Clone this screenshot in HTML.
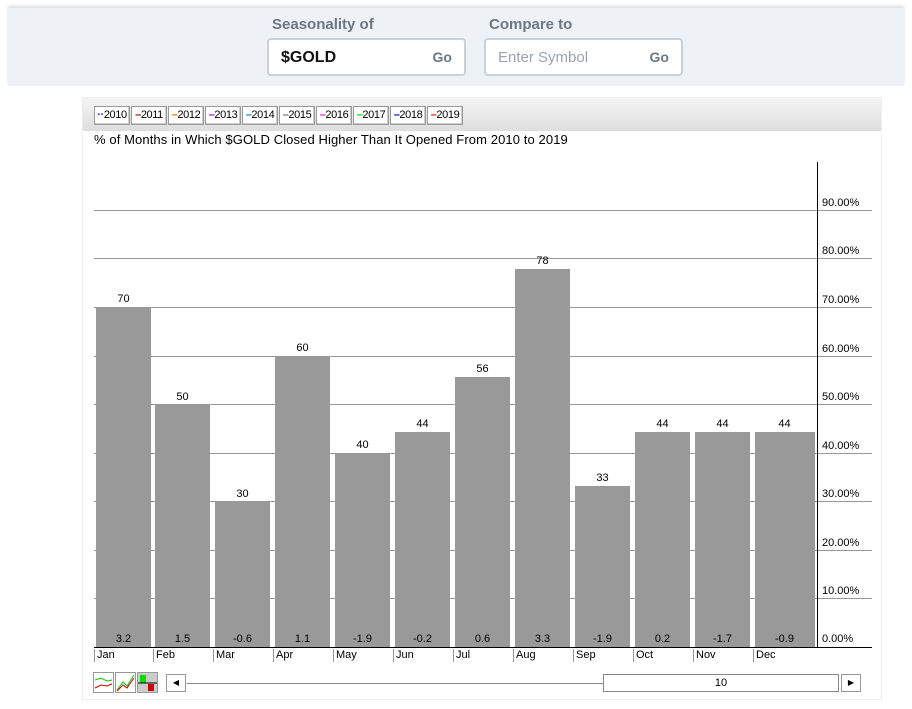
<!DOCTYPE html><html><head><style>
body{margin:0;width:912px;height:709px;background:#fff;position:relative;overflow:hidden;font-family:"Liberation Sans",sans-serif}
.top{position:absolute;left:8px;top:8px;width:896px;height:78px;background:#eef2f6;box-shadow:0 -2px 3px #ddd}
.lbl{position:absolute;top:16px;font-size:15px;font-weight:bold;color:#6b7785}
.inp{position:absolute;top:38px;height:38px;background:#fff;border:2px solid #c8d0da;border-radius:4px;box-sizing:border-box;font-size:15px}
.inp span{position:absolute;top:9px}
.chart{position:absolute;left:82px;top:97px;width:800px;height:603px;background:#fff;border:1px solid #eee;box-sizing:border-box}
.hdr{position:absolute;left:0;top:0;width:100%;height:33px;background:linear-gradient(#f4f4f4,#dedede)}
.leg{position:absolute;top:8px;width:36px;height:19px;border:1px solid #999;background:#fff;font-size:11px;line-height:17px;box-sizing:border-box;text-align:center;overflow:hidden;white-space:nowrap;letter-spacing:-0.4px;box-shadow:inset -1px -1px 0 #ccc}
.g{position:absolute;left:94px;width:778px;height:1px;background:#999}
.yl{position:absolute;left:822px;font-size:11px;color:#000}
.bar{position:absolute;width:55px;background:#999;bottom:62px}
.v{position:absolute;font-size:11px;width:55px;text-align:center}
.m{position:absolute;top:649px;font-size:11px;border-left:1px solid #999;padding-left:2px;height:13px}
</style></head><body>
<div class="top"></div>
<div class="lbl" style="left:272px">Seasonality of</div>
<div class="lbl" style="left:489px">Compare to</div>
<div class="inp" style="left:267px;width:199px"><span style="left:12px;font-weight:bold;color:#111;font-size:16px">$GOLD</span><span style="right:12px;color:#6b7785;font-weight:bold;font-size:14px">Go</span></div>
<div class="inp" style="left:484px;width:199px"><span style="left:12px;color:#9aa3ad">Enter Symbol</span><span style="right:12px;color:#6b7785;font-weight:bold;font-size:14px">Go</span></div>
<div class="chart"><div class="hdr"></div>
<div class="leg" style="left:11px"><b style="color:#33f">··</b>2010</div>
<div class="leg" style="left:48px"><b style="color:#900">–</b>2011</div>
<div class="leg" style="left:85px"><b style="color:#f60">–</b>2012</div>
<div class="leg" style="left:122px"><b style="color:#90f">–</b>2013</div>
<div class="leg" style="left:159px"><b style="color:#088">–</b>2014</div>
<div class="leg" style="left:196px"><b style="color:#666">–</b>2015</div>
<div class="leg" style="left:233px"><b style="color:#f0f">–</b>2016</div>
<div class="leg" style="left:270px"><b style="color:#0c0">–</b>2017</div>
<div class="leg" style="left:307px"><b style="color:#00c">–</b>2018</div>
<div class="leg" style="left:344px"><b style="color:#f00">–</b>2019</div>
<div style="position:absolute;left:11px;top:34px;font-size:13px;letter-spacing:0.1px">% of Months in Which $GOLD Closed Higher Than It Opened From 2010 to 2019</div>
</div>
<div class="g" style="top:210px"></div><div class="g" style="top:258px"></div><div class="g" style="top:307px"></div><div class="g" style="top:356px"></div><div class="g" style="top:404px"></div><div class="g" style="top:453px"></div><div class="g" style="top:501px"></div><div class="g" style="top:550px"></div><div class="g" style="top:598px"></div>
<div class="g" style="top:647px;background:#000"></div>
<div style="position:absolute;left:817px;top:162px;width:1px;height:486px;background:#000"></div>
<div class="yl" style="top:197px">90.00%</div><div class="yl" style="top:245px">80.00%</div><div class="yl" style="top:294px">70.00%</div><div class="yl" style="top:343px">60.00%</div><div class="yl" style="top:391px">50.00%</div><div class="yl" style="top:440px">40.00%</div><div class="yl" style="top:488px">30.00%</div><div class="yl" style="top:537px">20.00%</div><div class="yl" style="top:585px">10.00%</div><div class="yl" style="top:633px">0.00%</div>
<div class="bar" style="left:96px;height:340px"></div><div class="v" style="left:96px;top:293px">70</div><div class="v" style="left:96px;top:633px">3.2</div>
<div class="bar" style="left:155px;height:243px"></div><div class="v" style="left:155px;top:391px">50</div><div class="v" style="left:155px;top:633px">1.5</div>
<div class="bar" style="left:215px;height:146px"></div><div class="v" style="left:215px;top:488px">30</div><div class="v" style="left:215px;top:633px">-0.6</div>
<div class="bar" style="left:275px;height:291px"></div><div class="v" style="left:275px;top:342px">60</div><div class="v" style="left:275px;top:633px">1.1</div>
<div class="bar" style="left:335px;height:194px"></div><div class="v" style="left:335px;top:439px">40</div><div class="v" style="left:335px;top:633px">-1.9</div>
<div class="bar" style="left:395px;height:215px"></div><div class="v" style="left:395px;top:418px">44</div><div class="v" style="left:395px;top:633px">-0.2</div>
<div class="bar" style="left:455px;height:270px"></div><div class="v" style="left:455px;top:363px">56</div><div class="v" style="left:455px;top:633px">0.6</div>
<div class="bar" style="left:515px;height:378px"></div><div class="v" style="left:515px;top:255px">78</div><div class="v" style="left:515px;top:633px">3.3</div>
<div class="bar" style="left:575px;height:161px"></div><div class="v" style="left:575px;top:472px">33</div><div class="v" style="left:575px;top:633px">-1.9</div>
<div class="bar" style="left:635px;height:215px"></div><div class="v" style="left:635px;top:418px">44</div><div class="v" style="left:635px;top:633px">0.2</div>
<div class="bar" style="left:695px;height:215px"></div><div class="v" style="left:695px;top:418px">44</div><div class="v" style="left:695px;top:633px">-1.7</div>
<div class="bar" style="left:755px;height:215px;width:60px"></div><div class="v" style="left:757px;top:418px">44</div><div class="v" style="left:757px;top:633px">-0.9</div>
<div class="m" style="left:94px">Jan</div><div class="m" style="left:153px">Feb</div><div class="m" style="left:213px">Mar</div><div class="m" style="left:273px">Apr</div><div class="m" style="left:333px">May</div><div class="m" style="left:393px">Jun</div><div class="m" style="left:453px">Jul</div><div class="m" style="left:513px">Aug</div><div class="m" style="left:573px">Sep</div><div class="m" style="left:633px">Oct</div><div class="m" style="left:693px">Nov</div><div class="m" style="left:753px">Dec</div>
<svg style="position:absolute;left:93px;top:672px" width="66" height="22"><rect x="0.5" y="0.5" width="20" height="20" fill="#fff" stroke="#999"/><path d="M2 8 L8 6 L14 9 L19 8" stroke="#0c0" fill="none"/><path d="M2 16 L8 13 L14 14 L19 12" stroke="#c00" fill="none"/><rect x="22.5" y="0.5" width="20" height="20" fill="#fff" stroke="#999"/><path d="M24 18 L30 10 L34 14 L41 3" stroke="#0c0" fill="none"/><path d="M24 19 L30 13 L34 16 L41 6" stroke="#c00" fill="none"/><rect x="44.5" y="0.5" width="20" height="20" fill="#ccc" stroke="#999"/><rect x="47" y="3" width="6" height="8" fill="#0d0"/><rect x="55" y="12" width="6" height="7" fill="#c00"/><path d="M45 11 H64" stroke="#000"/></svg>
<div style="position:absolute;left:166px;top:674px;width:20px;height:18px;border:1px solid #999;box-sizing:border-box;font-size:8px;text-align:center;line-height:16px">◀</div>
<div style="position:absolute;left:187px;top:683px;width:417px;height:1px;background:#888"></div>
<div style="position:absolute;left:603px;top:674px;width:236px;height:18px;border:1px solid #888;box-sizing:border-box;font-size:11px;text-align:center;line-height:16px">10</div>
<div style="position:absolute;left:841px;top:674px;width:20px;height:18px;border:1px solid #999;box-sizing:border-box;font-size:8px;text-align:center;line-height:16px">▶</div>
</body></html>
